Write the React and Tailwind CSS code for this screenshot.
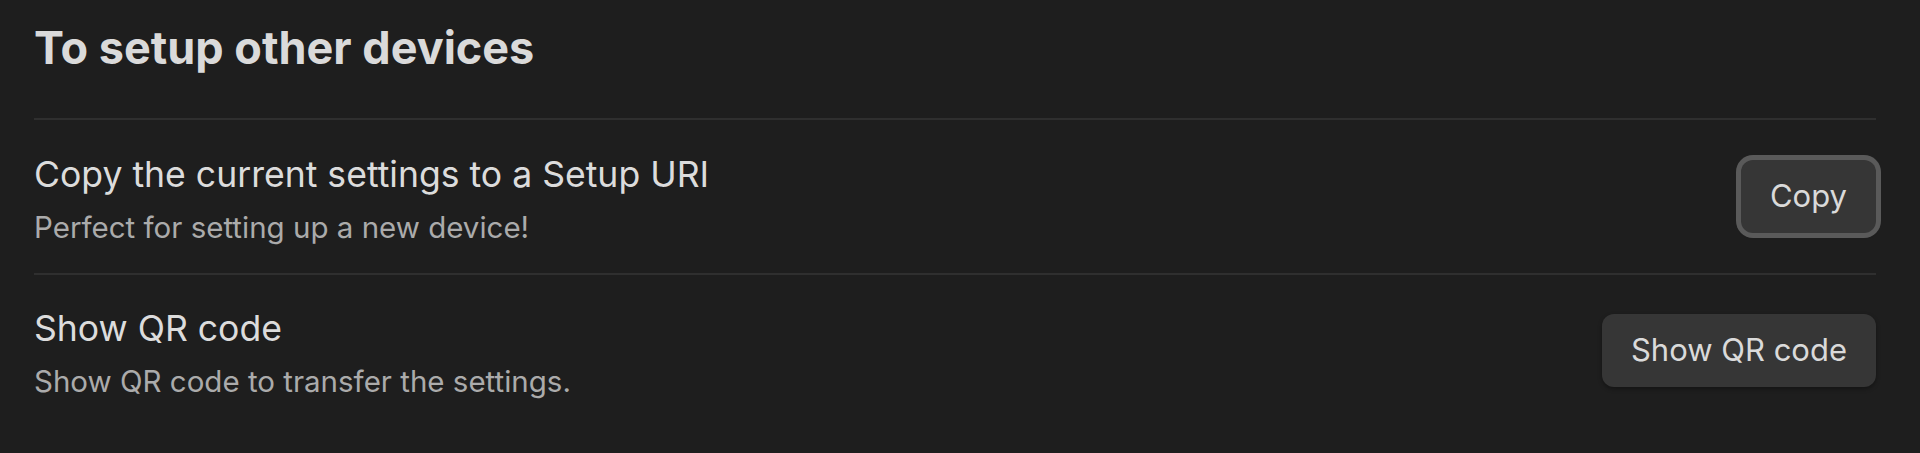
const rows = [
  {
    name: 'Copy the current settings to a Setup URI',
    desc: 'Perfect for setting up a new device!',
    button: 'Copy',
    focused: true,
  },
  {
    name: 'Show QR code',
    desc: 'Show QR code to transfer the settings.',
    button: 'Show QR code',
  },
]

function SettingRow({ name, desc, button, focused, first }) {
  return (
    <div className={`flex items-center h-[153px] ${first ? '' : 'border-t-2 border-[#2f2f2f]'}`}>
      <div className="flex-1 min-w-0 mt-[6px]">
        <div className="text-[35.6px] leading-[42px] text-[#dcdcdc]">{name}</div>
        <div className="mt-[12px] text-[29.5px] leading-[38px] text-[#ababab]">{desc}</div>
      </div>
      <button
        className={`shrink-0 h-[73px] px-[29px] rounded-[12px] bg-[#363636] text-[31px] text-[#dadada] shadow-[0_2px_4px_rgba(0,0,0,0.35)] ${
          focused ? 'ring-[5px] ring-[#5a5a5a]' : ''
        }`}
      >
        {button}
      </button>
    </div>
  )
}

export default function App() {
  return (
    <div className="min-h-[453px] bg-[#1e1e1e] pl-[34px] pr-[44px] font-['Inter','Noto_Sans',sans-serif]">
      <h2 className="pt-[22px] text-[45px] leading-[52px] font-bold text-[#dadada]">To setup other devices</h2>
      <div className="mt-[44px] border-t-2 border-[#2f2f2f]">
        {rows.map((r, i) => (
          <SettingRow key={r.name} {...r} first={i === 0} />
        ))}
      </div>
    </div>
  )
}
